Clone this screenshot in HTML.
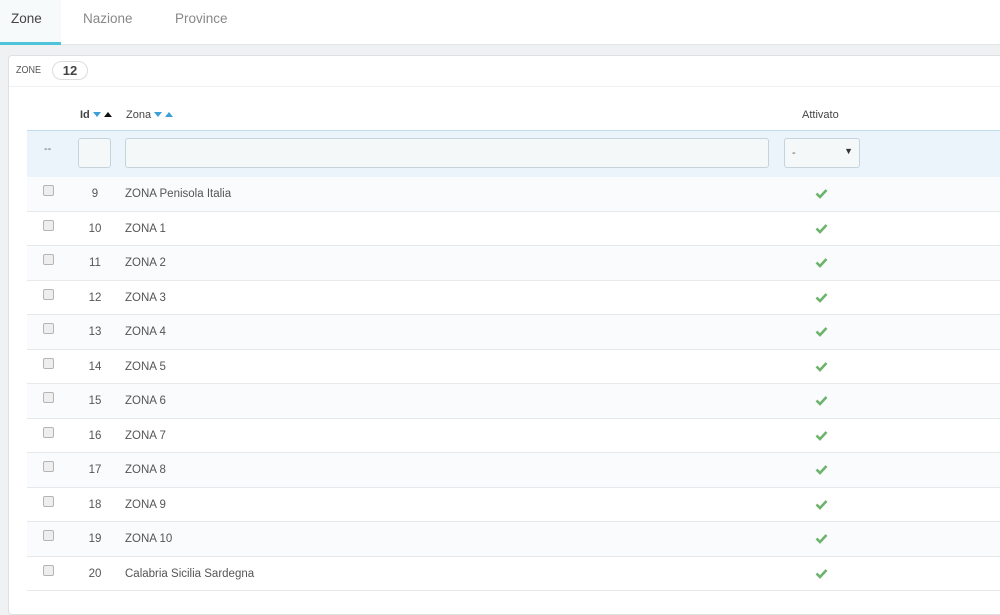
<!DOCTYPE html>
<html><head><style>
*{margin:0;padding:0;box-sizing:border-box}
body{width:1000px;height:603px;overflow:hidden;background:#eff1f2;font-family:"Liberation Sans",sans-serif;color:#555;position:relative}
.tabs{position:absolute;left:0;top:0;width:1000px;height:45px;background:#fff;border-bottom:1px solid #e2e5e7}
.tab{position:absolute;top:11px;font-size:13.5px;color:#888}
.act{position:absolute;left:0;top:0;width:61px;height:45px;background:#f6fafb;border-bottom:3px solid #4fc3d9}
.panel{position:absolute;left:8px;top:55px;width:1000px;height:560px;background:#fff;border:1px solid #dde1e3;border-radius:4px}
.ph{position:absolute;left:7px;top:9px;font-size:10px;color:#555;letter-spacing:0;transform:scaleX(.9);transform-origin:left}
.badge{position:absolute;left:43px;top:5px;width:36px;height:19px;border:1px solid #ddd;border-radius:10px;font-size:13px;font-weight:bold;text-align:center;line-height:17px;color:#444}
.hl{position:absolute;left:0;top:30px;width:1000px;border-top:1px solid #eef0f1}
.th{position:absolute;top:53px;font-size:11px;color:#444}
.filt{position:absolute;left:18px;top:74px;width:980px;height:48px;background:#eaf4fa;border-top:1px solid #c4dfec;border-bottom:1px solid #c4dfec}
.inp{position:absolute;top:7px;height:30px;background:#f5f8f9;border:1px solid #c5d4dc;border-radius:3px}
.row{position:absolute;left:27px;width:980px;border-bottom:1px solid #e6e9eb;font-size:11.5px;color:#555}
.row.t{background:#fafbfd}
.cb{position:absolute;left:16px;top:8px;width:11px;height:11px;border:1px solid #b5b5b5;border-radius:2px;background:#eee}
.id{position:absolute;left:48px;width:40px;text-align:center;top:11px}
.nm{position:absolute;left:98px;top:11px}
.ck{position:absolute;left:788px;top:11px}
.up{display:inline-block;width:0;height:0;border-left:4px solid transparent;border-right:4px solid transparent;border-bottom:5px solid #3aa0d5;vertical-align:1px}
.dn{display:inline-block;width:0;height:0;border-left:4px solid transparent;border-right:4px solid transparent;border-top:5px solid #3aa0d5;vertical-align:1px}
</style></head><body>
<div class="tabs"><div class="act"></div>
<div class="tab" style="left:11px;color:#444">Zone</div>
<div class="tab" style="left:83px">Nazione</div>
<div class="tab" style="left:175px">Province</div></div>
<div class="panel">
<div class="ph">ZONE</div><div class="badge">12</div><div class="hl"></div>
<div class="th" style="left:71px;font-weight:bold">Id <span class="dn"></span> <span class="up" style="border-bottom-color:#111"></span></div>
<div class="th" style="left:117px">Zona <span class="dn"></span> <span class="up"></span></div>
<div class="th" style="left:793px">Attivato</div>
<div class="filt">
<div style="position:absolute;left:17px;top:12px;font-size:11px;color:#666">--</div>
<div class="inp" style="left:51px;width:33px"></div>
<div class="inp" style="left:98px;width:644px"></div>
<div class="inp" style="left:757px;width:76px"><span style="position:absolute;left:7px;top:8px;font-size:11px">-</span><span style="position:absolute;right:6px;top:7px;font-size:9px;color:#333">▼</span></div>
</div>
</div>
<div id="rows"></div>
<script>
var d=[[9,"ZONA Penisola Italia"],[10,"ZONA 1"],[11,"ZONA 2"],[12,"ZONA 3"],[13,"ZONA 4"],[14,"ZONA 5"],[15,"ZONA 6"],[16,"ZONA 7"],[17,"ZONA 8"],[18,"ZONA 9"],[19,"ZONA 10"],[20,"Calabria Sicilia Sardegna"]];
var h="";d.forEach(function(r,i){var t=Math.round(177+i*34.5),n=Math.round(177+(i+1)*34.5);h+='<div class="row'+(i%2==0?' t':'')+'" style="top:'+t+'px;height:'+(n-t)+'px"><div class="cb"></div><div class="id">'+r[0]+'</div><div class="nm">'+r[1]+'</div><svg class="ck" width="13" height="11" viewBox="0 0 13 11"><path d="M1.5 5.5 L5 9 L11.5 2" stroke="#6cb36c" stroke-width="2.6" fill="none"/></svg></div>';});
document.getElementById("rows").innerHTML=h;
</script>
</body></html>
